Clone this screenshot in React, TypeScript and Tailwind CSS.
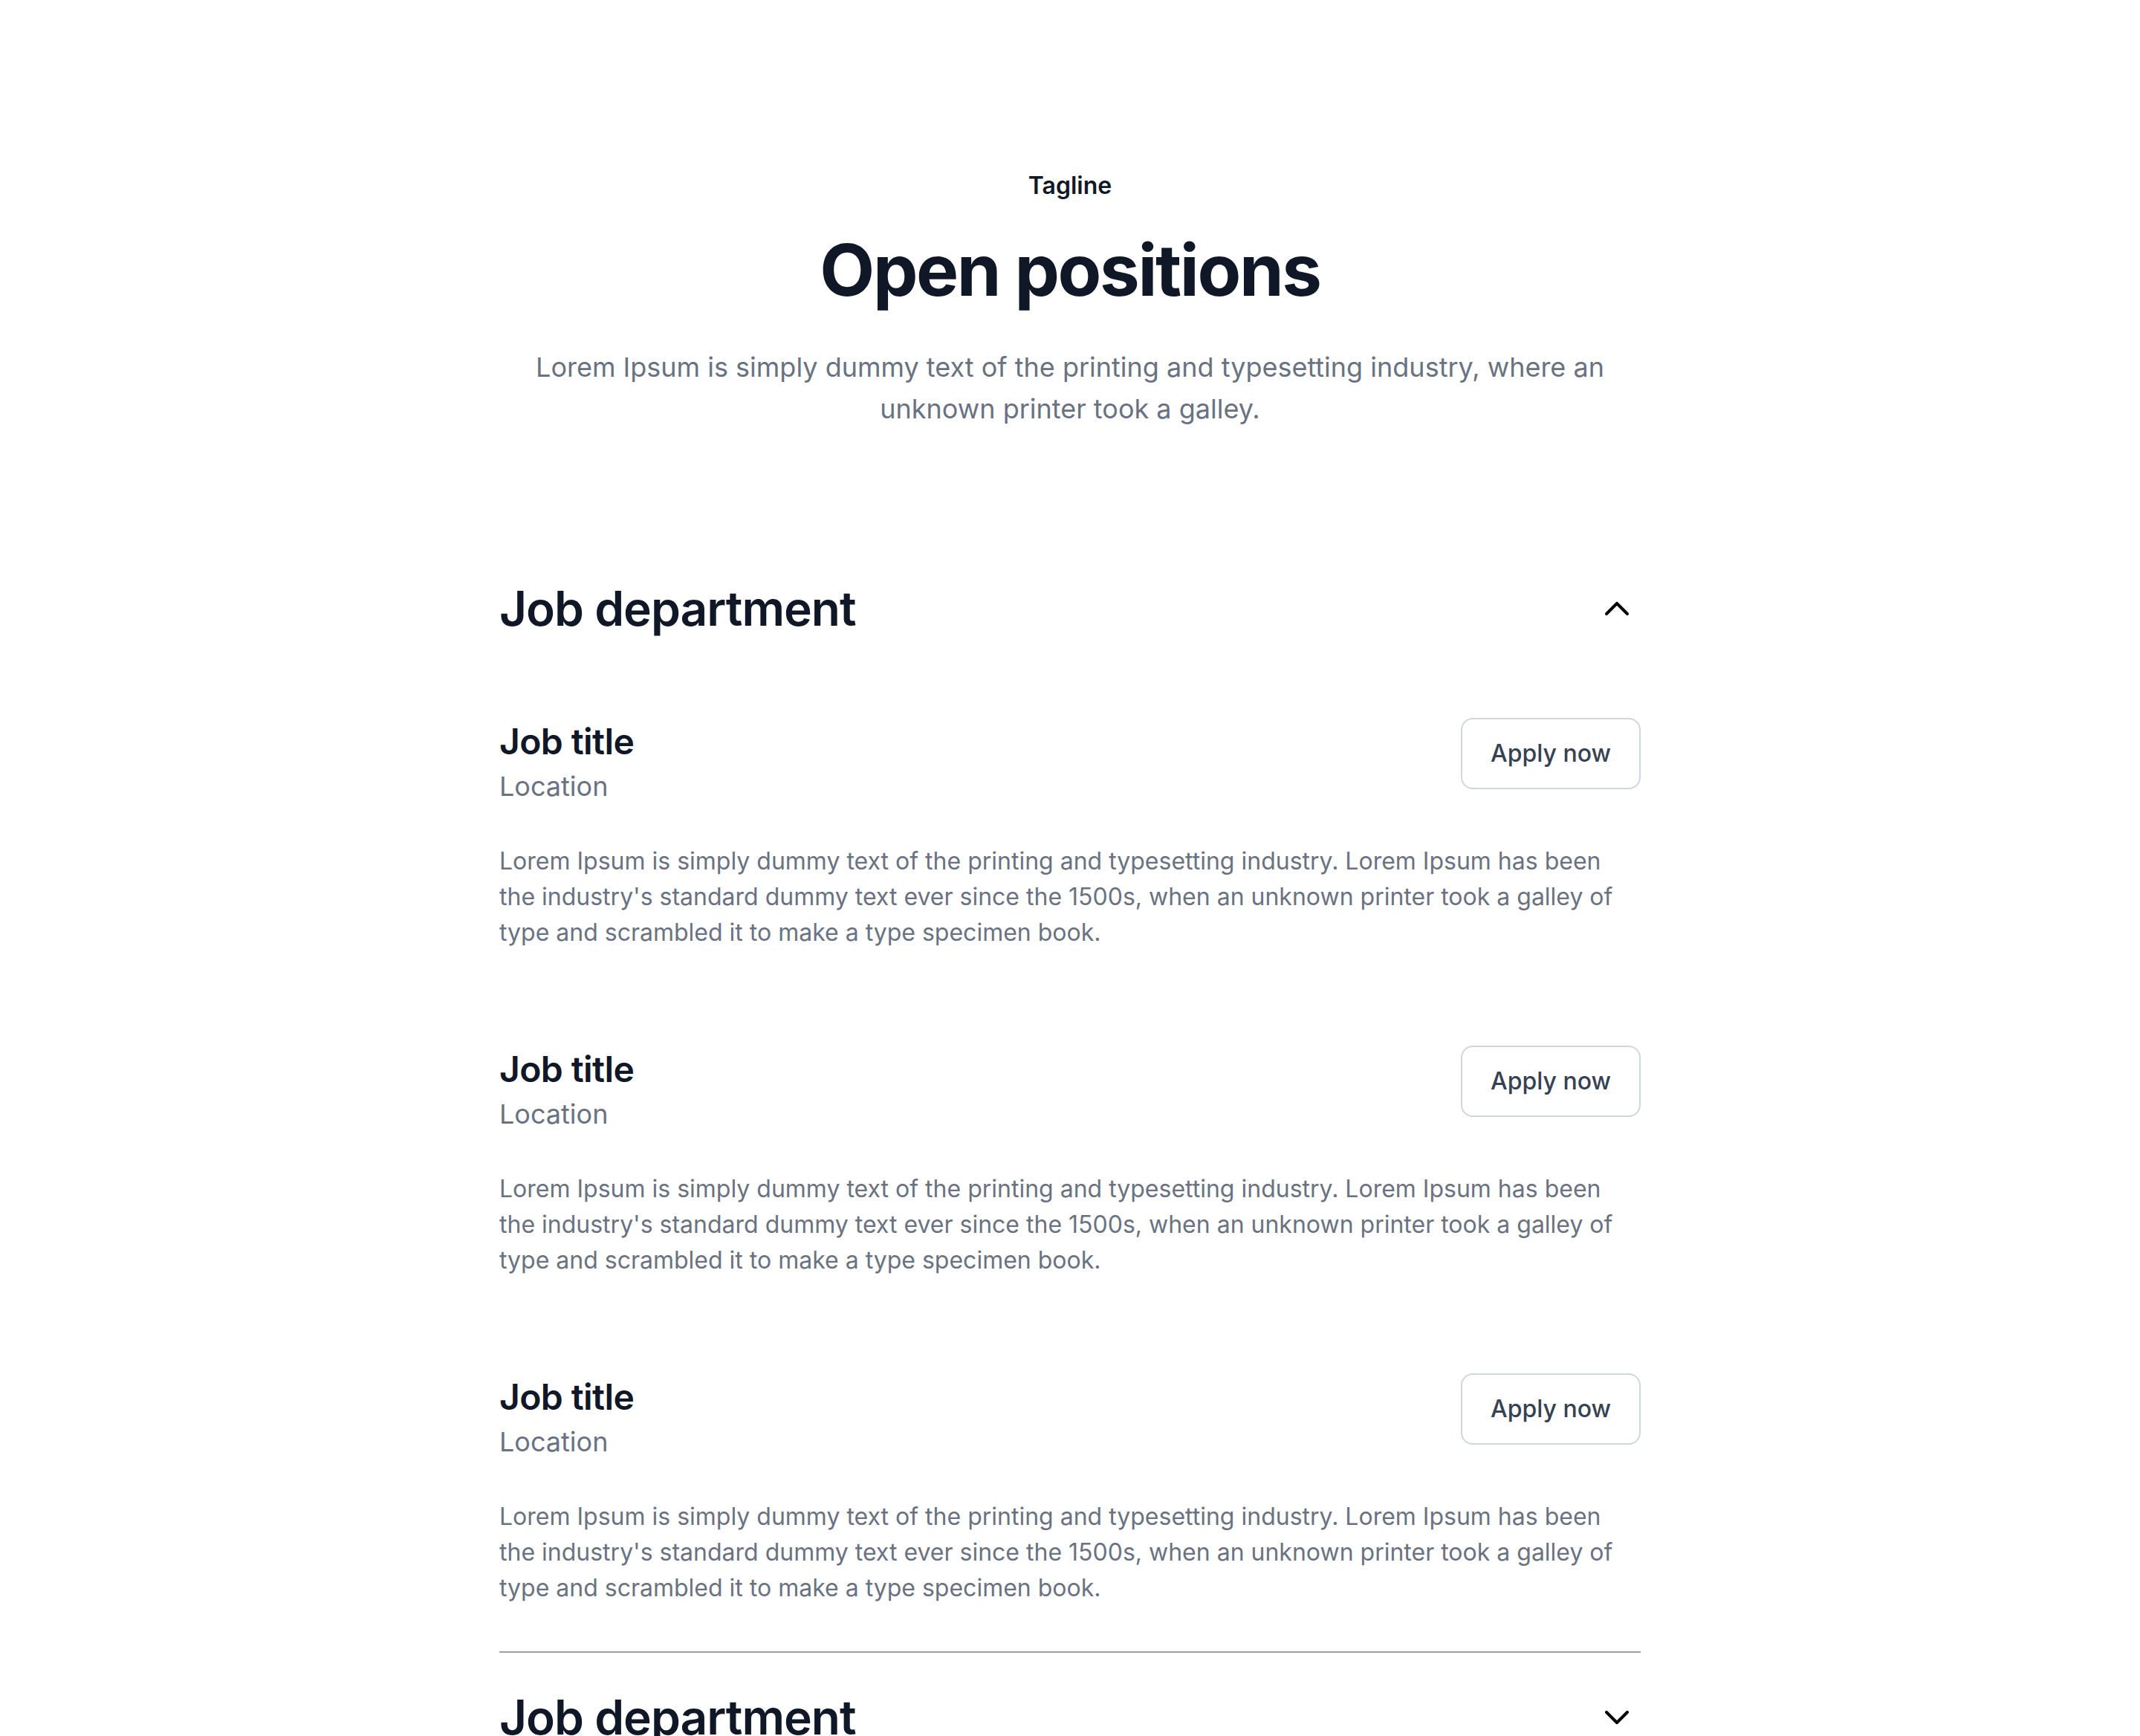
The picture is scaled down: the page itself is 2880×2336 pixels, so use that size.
import { useState } from 'react';

interface Job {
  title: string;
  location: string;
  description: string;
}

interface Department {
  name: string;
  jobs: Job[];
}

const lorem =
  "Lorem Ipsum is simply dummy text of the printing and typesetting industry. Lorem Ipsum has been the industry's standard dummy text ever since the 1500s, when an unknown printer took a galley of type and scrambled it to make a type specimen book.";

const departments: Department[] = [
  {
    name: 'Job department',
    jobs: [
      { title: 'Job title', location: 'Location', description: lorem },
      { title: 'Job title', location: 'Location', description: lorem },
      { title: 'Job title', location: 'Location', description: lorem }
    ]
  },
  {
    name: 'Job department',
    jobs: [
      { title: 'Job title', location: 'Location', description: lorem },
      { title: 'Job title', location: 'Location', description: lorem }
    ]
  }
];

function Chevron({ open }: { open: boolean }) {
  return (
    <svg
      width="56"
      height="56"
      viewBox="0 0 24 24"
      fill="none"
      stroke="#000"
      strokeWidth="1.75"
      strokeLinecap="round"
      strokeLinejoin="round"
      className="mr-1 shrink-0"
    >
      <path d={open ? 'm6 15 6-6 6 6' : 'm6 9 6 6 6-6'} />
    </svg>
  );
}

function JobItem({ job, first }: { job: Job; first: boolean }) {
  return (
    <div className={first ? 'pt-[107px]' : 'pt-[128px]'}>
      <div className="flex items-start justify-between">
        <div>
          <h3 className="text-[48px] leading-[64px] font-semibold tracking-[-0.6px] text-gray-900">{job.title}</h3>
          <p className="text-[36px] leading-[56px] text-gray-500">{job.location}</p>
        </div>
        <button className="rounded-2xl border-2 border-gray-300 bg-white px-[38px] py-[22px] text-[32px] leading-[48px] font-medium text-gray-700">
          Apply now
        </button>
      </div>
      <p className="mt-[49px] text-[32px] leading-[48px] text-gray-500">{job.description}</p>
    </div>
  );
}

export default function App() {
  const [open, setOpen] = useState<number[]>([0]);

  const toggle = (i: number) =>
    setOpen(prev => (prev.includes(i) ? prev.filter(x => x !== i) : [...prev, i]));

  return (
    <div className="min-h-screen bg-white font-['Inter',sans-serif]">
      <section className="mx-auto max-w-[1536px] pt-[226px] pb-[100px]">
        {/* Header */}
        <div className="text-center">
          <p className="text-[32px] leading-[48px] font-semibold text-gray-900">Tagline</p>
          <h2 className="mt-[32px] text-[96px] leading-[115px] font-bold tracking-tight text-gray-900">
            Open positions
          </h2>
          <p className="mt-[45px] text-[36px] leading-[56px] text-gray-500">
            Lorem Ipsum is simply dummy text of the printing and typesetting industry, where an unknown printer took a galley.
          </p>
        </div>

        {/* Departments */}
        <div className="mt-[154px]">
          {departments.map((dept, i) => {
            const isOpen = open.includes(i);
            return (
              <div
                key={i}
                className={i < departments.length - 1 ? 'border-b-2 border-gray-400 pt-[47px] pb-[61px]' : 'pt-[47px] pb-[61px]'}
              >
                <button
                  onClick={() => toggle(i)}
                  className="flex h-[80px] w-full items-center justify-between text-left"
                >
                  <span className="text-[64px] leading-[80px] font-semibold tracking-[-1px] text-gray-900">{dept.name}</span>
                  <Chevron open={isOpen} />
                </button>
                {isOpen && (
                  <div>
                    {dept.jobs.map((job, j) => (
                      <JobItem key={j} job={job} first={j === 0} />
                    ))}
                  </div>
                )}
              </div>
            );
          })}
        </div>
      </section>
    </div>
  );
}
